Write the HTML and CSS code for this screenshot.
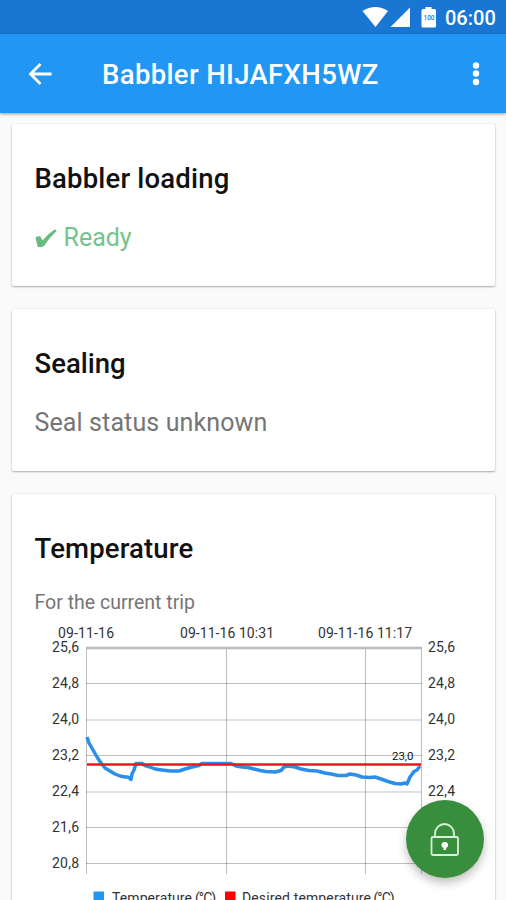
FILE: index.html
```html
<!DOCTYPE html>
<html lang="en">
<head>
<meta charset="utf-8">
<title>Babbler HIJAFXH5WZ</title>
<link rel="stylesheet" href="styles.css">
</head>
<body>
<div class="screen">
  <div class="status-bar">
    <svg class="status-icons" width="76" height="34" viewBox="362 0 76 34">
      <path class="fill-white" d="M362.500 11Q375.500 3 388 11L375.500 27ZM390.500 27H410V7.500Z"/>
      <path class="fill-white" d="M425.500 7h6v2h3q1.500 0 1.500 1.500v15.500q0 1.500-1.500 1.500h-11.500q-1.500 0-1.500-1.500v-15.500q0-1.500 1.500-1.500h2.500z"/>
      <text class="battery-level" x="429" y="19.500" text-anchor="middle" textLength="11" lengthAdjust="spacingAndGlyphs">100</text>
    </svg>
    <span class="clock">06:00</span>
  </div>
  <header class="app-bar">
    <svg class="back" width="24" height="24" viewBox="0 0 24 24"><path d="M23.500 12H2.500M12.500 2L2.500 12l10 10"/></svg>
    <h1 class="app-title">Babbler HIJAFXH5WZ</h1>
    <svg class="more" width="8" height="26" viewBox="0 0 8 26"><circle cx="4" cy="4.500" r="3.200"/><circle cx="4" cy="12.500" r="3.200"/><circle cx="4" cy="21" r="3.200"/></svg>
  </header>
  <main class="cards">
    <section class="card">
      <h2 class="card-title title-loading">Babbler loading</h2>
      <p class="card-text ready">
        <svg class="check" width="23" height="22" viewBox="0 0 23 22"><path d="M.5 10.500Q3 8.500 5.500 9.500L7.500 13.500Q13 7 19.500 2.500L22 3.500Q14 11 9 19Q6 21 2.500 19.500Z"/></svg>
        <span>Ready</span>
      </p>
    </section>
    <section class="card">
      <h2 class="card-title title-sealing">Sealing</h2>
      <p class="card-text seal">Seal status unknown</p>
    </section>
    <section class="card card-chart">
      <h2 class="card-title title-temperature">Temperature</h2>
      <p class="caption">For the current trip</p>
      <svg class="chart" width="483" height="290" viewBox="12 620 483 290">
        <path class="grid" d="M86 683.500H421.500M86 720H421.500M86 755.500H421.500M86 792H421.500M86 827.500H421.500M86 863.500H421.500M226.500 648V874M365.500 648V874M86.500 648V874M421.500 648V874"/>
        <path class="grid-top" d="M86 648H422"/>
        <path class="series" d="M87 737L89 743L93 750L97 757L101 763L105 768L110 771L115 774L120 776L125 777L128 777L131 779.500L132 774L134 770L136 763.500L142 763.500L145 765.500L150 767L155 769L162 770L170 771L179 771L185 769L192 767L199 765.500L202 763.500L231 763.500L236 766L242 767L248 767.500L254 769L260 770.500L266 771.500L275 772L281 770.500L284 767L288 766L295 767L301 769L309 770.500L317 771L325 773L331 774L338 775.500L346 775.500L350 774L356 775L362 777L370 777.500L375 777L381 779L388 781.500L395 783.500L401 784L405 783L407 784L410 777L414 771.500L417 770L420 766"/>
        <path class="target" d="M87 764.500H421"/>
        <g class="labels">
          <text x="58" y="638" textLength="56">09-11-16</text>
          <text x="180" y="638" textLength="94">09-11-16 10:31</text>
          <text x="318" y="638" textLength="94">09-11-16 11:17</text>
          <text x="52" y="652" textLength="27">25,6</text><text x="428" y="652" textLength="27">25,6</text>
          <text x="52" y="688" textLength="27">24,8</text><text x="428" y="688" textLength="27">24,8</text>
          <text x="52" y="724" textLength="27">24,0</text><text x="428" y="724" textLength="27">24,0</text>
          <text x="52" y="760" textLength="27">23,2</text><text x="428" y="760" textLength="27">23,2</text>
          <text x="52" y="796" textLength="27">22,4</text><text x="428" y="796" textLength="27">22,4</text>
          <text x="52" y="832" textLength="27">21,6</text>
          <text x="52" y="868" textLength="27">20,8</text>
          <text class="value" x="392" y="759.500" textLength="21.500">23,0</text>
          <text x="112" y="903" textLength="80">Temperature</text>
          <text x="195" y="903" textLength="21">(°C)</text>
          <text x="242" y="903" textLength="129">Desired temperature</text>
          <text x="373.500" y="903" textLength="21">(°C)</text>
        </g>
        <rect class="key-blue" x="93.500" y="891.500" width="10.500" height="11"/>
        <rect class="key-red" x="225" y="891.500" width="10.500" height="11"/>
      </svg>
    </section>
  </main>
  <button class="fab" aria-label="Seal">
    <svg width="30" height="36" viewBox="0 0 30 36"><rect x="1.500" y="16" width="26.500" height="18" rx="1.500"/><path d="M5 15.500V12.500a9.500 9.500 0 0 1 19 0V15.500"/><path class="keyhole" d="M14.800 21a3 3 0 0 1 1.300 5.800V29h-2.600V26.800A3 3 0 0 1 14.800 21Z"/></svg>
  </button>
</div>
</body>
</html>
```
FILE: styles.css
```css
* { box-sizing: border-box; }
body { margin: 0; font-family: Roboto, "Liberation Sans", sans-serif; }
h1, h2, p { margin: 0; font-weight: 400; white-space: nowrap; }
svg { display: block; flex: none; }

.screen {
  position: relative;
  width: 506px;
  height: 900px;
  overflow: hidden;
  background: #fafafa;
}

.status-bar {
  display: flex;
  justify-content: flex-end;
  height: 34px;
  padding-right: 10px;
  background: #1976d2;
  color: #fff;
}
.status-icons { margin-right: 7px; }
.fill-white { fill: #fff; }
.battery-level { font-size: 8px; font-weight: 500; fill: #1976d2; }
.clock { width: 51px; font-size: 20px; font-weight: 500; line-height: 36px; white-space: nowrap; }

.app-bar {
  position: relative;
  display: flex;
  align-items: center;
  height: 79px;
  padding: 0 26px 0 28px;
  background: #2196f3;
  color: #fff;
  box-shadow: 0 1px 3px rgba(0, 0, 0, .4);
}
.back { fill: none; stroke: #fff; stroke-width: 2.800; }
.app-title { flex: 1; margin-left: 50px; padding-top: 2px; font-size: 27.500px; font-weight: 500; line-height: 32px; letter-spacing: .35px; }
.more { fill: #fff; }

.cards { display: flex; flex-direction: column; gap: 23px; padding: 11px 11px 0 12px; }
.card {
  height: 162px;
  padding: 39px 23px 0 22.500px;
  border-radius: 2px;
  background: #fff;
  box-shadow: 0 1px 2px rgba(0, 0, 0, .3), 0 0 2px rgba(0, 0, 0, .1);
}
.card-chart { height: 430px; padding-right: 0; }
.card-title { font-size: 27.500px; font-weight: 500; line-height: 32px; color: #111; }
.title-loading { letter-spacing: .18px; }
.title-temperature { letter-spacing: .16px; }
.card-text { margin-top: 27px; font-size: 25px; line-height: 32px; color: #757575; }
.seal { letter-spacing: .12px; }
.ready { display: flex; align-items: center; gap: 6px; color: #77c38d; }
.check { fill: #66bb80; }
.caption { margin-top: 26px; font-size: 19.500px; line-height: 24px; color: #757575; }
.chart { margin: 5px 0 0 -22.500px; }

.grid { fill: none; stroke: #000; stroke-opacity: .25; stroke-width: 1; }
.grid-top { stroke: #bbb; stroke-width: 2.500; }
.series { fill: none; stroke: #2b8fea; stroke-width: 3.500; stroke-linejoin: round; }
.target { stroke: #f01420; stroke-width: 2.500; }
.labels { font-size: 14px; fill: #333; }
.value { font-size: 11.500px; fill: #111; }
.key-blue { fill: #2196f3; }
.key-red { fill: #f00; }

.fab {
  position: absolute;
  left: 406px;
  top: 800px;
  display: flex;
  align-items: center;
  justify-content: center;
  width: 78px;
  height: 78px;
  padding: 0;
  border: 0;
  border-radius: 50%;
  background: #388e3c;
  box-shadow: 0 5px 10px rgba(0, 0, 0, .25);
}
.fab svg { fill: none; stroke: #d5f2d6; stroke-width: 1.800; }
.fab .keyhole { fill: #fff; stroke: none; }
```
